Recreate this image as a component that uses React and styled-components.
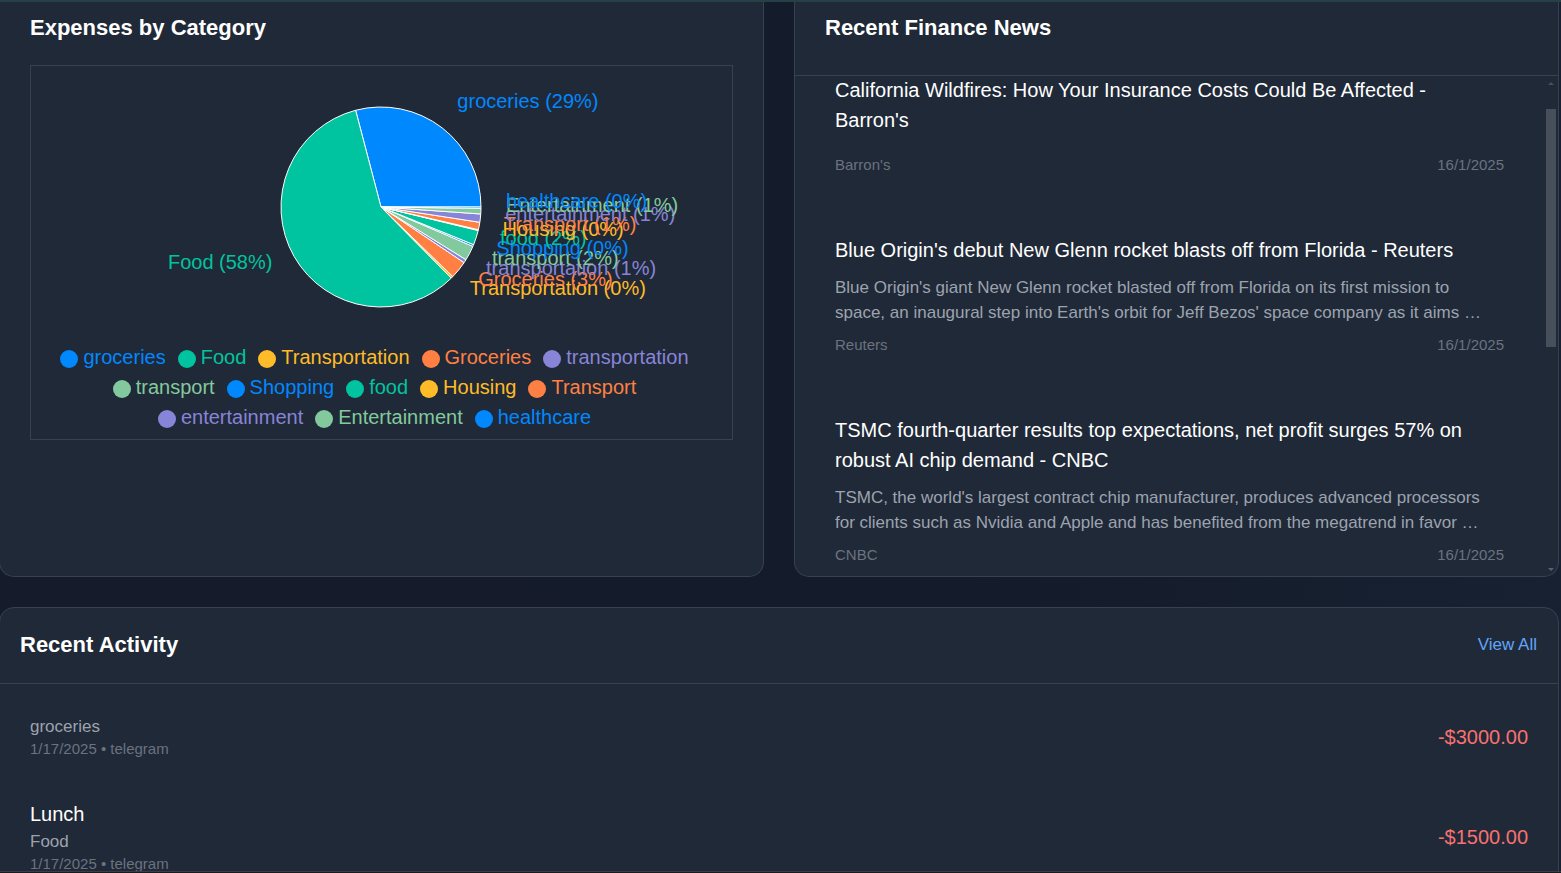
import React from "react";
import styled, { createGlobalStyle } from "styled-components";

const GlobalStyle = createGlobalStyle`
  *, *::before, *::after { box-sizing: border-box; }
  body {
    margin: 0;
    overflow: hidden;
    background: #141b2a;
    color: #fff;
    font: 20px/30px "Liberation Sans", Arial, sans-serif;
  }
  h2, h3, p, ul { margin: 0; padding: 0; }
  ul { list-style: none; }
`;

const Viewport = styled.div`
  display: flex;
  flex-direction: column;
  height: 100vh;
  overflow: hidden;
  background: linear-gradient(90deg, #151b2b 0%, #141b2a 60%, #172131 100%);
`;

const TopEdge = styled.div`
  flex: none;
  height: 2px;
  background: #264145;
`;

const Content = styled.main`
  flex: 1;
  min-height: 0;
  margin: 0 2px 0 -1px;
  overflow: hidden;
`;

const BottomEdge = styled.div`
  flex: none;
  height: 2px;
  border-top: 1px solid #3a3d42;
  background: #1b1b1d;
`;

const Columns = styled.div`
  display: grid;
  grid-template-columns: 1fr 1fr;
  gap: 30px;
  margin-bottom: 30px;
`;

const Card = styled.section`
  min-width: 0;
  background: #202937;
  border: 1px solid #374151;
  border-radius: 15px;
  ${(p) => p.$cut && "border-top: 0; border-top-left-radius: 0; border-top-right-radius: 0;"}
`;

const Title = styled.h2`
  font-size: 22px;
  line-height: 30px;
  font-weight: 700;
`;

const ChartCard = styled(Card)`
  padding: 11px 30px 10px;
`;

const ChartFrame = styled.div`
  margin-top: 22px;
  padding-bottom: 7px;
  border: 1px solid #374151;
`;

const PieSvg = styled.svg`
  display: block;
  margin: 0 auto;
  max-width: 100%;
  font-size: 20px;
`;

const Legend = styled.ul`
  display: flex;
  flex-wrap: wrap;
  justify-content: center;
  padding: 0 26px 0 24px;
`;

const LegendItem = styled.li`
  display: flex;
  align-items: center;
  gap: 5px;
  margin-right: 12px;
  color: ${(p) => p.$color};

  &::before {
    content: "";
    width: 18px;
    height: 18px;
    margin-top: 3px;
    border-radius: 50%;
    background: currentColor;
  }
`;

const NewsHeader = styled.header`
  padding: 11px 30px 32px;
  border-bottom: 1px solid #374151;
`;

const NewsBody = styled.div`
  display: flex;
  margin-top: -1px;
`;

const NewsList = styled.ul`
  flex: 1;
  min-width: 0;
  display: flex;
  flex-direction: column;
  gap: 60px;
  padding: 0 42px 11px 40px;
`;

const NewsItem = styled.li`
  display: flex;
  flex-direction: column;
  gap: 10px;
`;

const Headline = styled.h3`
  font-size: 20px;
  line-height: 30px;
  font-weight: 400;
`;

const Excerpt = styled.p`
  color: #9ca3af;
  font-size: 17px;
  line-height: 25px;
`;

const Meta = styled.div`
  display: flex;
  justify-content: space-between;
  color: #6b7280;
  font-size: 15px;
  line-height: 20px;
`;

const ScrollTrack = styled.div`
  flex: none;
  display: flex;
  flex-direction: column;
  align-items: center;
  width: 10px;
  margin-right: 2px;
  padding: 7px 0 5px;
`;

const ScrollThumb = styled.div`
  width: 10px;
  height: 238px;
  margin: 24px 0 auto;
  background: #474f5b;
`;

const ActivityHeader = styled.header`
  display: flex;
  justify-content: space-between;
  align-items: center;
  padding: 22px 21px 23px 20px;
  border-bottom: 1px solid #374151;
`;

const ViewAll = styled.a`
  color: #60a5fa;
  font-size: 17px;
  text-decoration: none;
`;

const ActivityList = styled.ul`
  display: flex;
  flex-direction: column;
  gap: 40px;
  padding: 30px;
`;

const ActivityItem = styled.li`
  display: flex;
  justify-content: space-between;
  align-items: center;
`;

const Category = styled.p`
  color: #9ca3af;
  font-size: 17px;
  line-height: 25px;
`;

const Amount = styled.span`
  color: #f87171;
`;

const BLUE = "#0088fe";
const GREEN = "#00c49f";
const YELLOW = "#ffbb28";
const ORANGE = "#ff8042";
const PURPLE = "#8884d8";
const MINT = "#82ca9d";

// Each slice runs counter-clockwise from the previous end angle.
const slices = [
  { name: "groceries", percent: 29, end: 104.7, color: BLUE },
  { name: "Food", percent: 58, end: 314.7, color: GREEN },
  { name: "Transportation", percent: 0, end: 315.9, color: YELLOW },
  { name: "Groceries", percent: 3, end: 326.2, color: ORANGE },
  { name: "transportation", percent: 1, end: 328.2, color: PURPLE },
  { name: "transport", percent: 2, end: 336.8, color: MINT },
  { name: "Shopping", percent: 0, end: 337.9, color: BLUE },
  { name: "food", percent: 2, end: 346.4, color: GREEN },
  { name: "Housing", percent: 0, end: 346.9, color: YELLOW },
  { name: "Transport", percent: 1, end: 351.2, color: ORANGE },
  { name: "entertainment", percent: 1, end: 356, color: PURPLE },
  { name: "Entertainment", percent: 1, end: 359.2, color: MINT },
  { name: "healthcare", percent: 0, end: 360, color: BLUE },
].map((s, i, all) => ({ ...s, start: i ? all[i - 1].end : 0 }));

const point = (angle, radius) => {
  const a = (angle * Math.PI) / 180;
  return [Math.cos(a) * radius, -Math.sin(a) * radius];
};

function Pie() {
  return (
    <PieSvg width="601" height="276" viewBox="-300 -141 601 276" role="img" aria-label="Expenses by category">
      {slices.map((s) => {
        const large = s.end - s.start > 180 ? 1 : 0;
        return (
          <path
            key={s.name}
            d={`M0 0L${point(s.start, 100).join(" ")}A100 100 0 ${large} 0 ${point(s.end, 100).join(" ")}Z`}
            fill={s.color}
            stroke="#fff"
          />
        );
      })}
      {slices.map((s) => {
        const [x, y] = point((s.start + s.end) / 2, 125);
        return (
          <text key={s.name} x={x} y={y} fill={s.color} textAnchor={x > 0 ? "start" : "end"}>
            {`${s.name} (${s.percent}%)`}
          </text>
        );
      })}
    </PieSvg>
  );
}

const news = [
  {
    title: ["California Wildfires: How Your Insurance Costs Could Be Affected -", "Barron's"],
    excerpt: [],
    source: "Barron's",
  },
  {
    title: ["Blue Origin's debut New Glenn rocket blasts off from Florida - Reuters"],
    excerpt: [
      "Blue Origin's giant New Glenn rocket blasted off from Florida on its first mission to",
      "space, an inaugural step into Earth's orbit for Jeff Bezos' space company as it aims …",
    ],
    source: "Reuters",
  },
  {
    title: ["TSMC fourth-quarter results top expectations, net profit surges 57% on", "robust AI chip demand - CNBC"],
    excerpt: [
      "TSMC, the world's largest contract chip manufacturer, produces advanced processors",
      "for clients such as Nvidia and Apple and has benefited from the megatrend in favor …",
    ],
    source: "CNBC",
  },
];

const activity = [
  { category: "groceries", amount: "-$3000.00" },
  { title: "Lunch", category: "Food", amount: "-$1500.00" },
];

const lines = (list) =>
  list.map((text, i) => (
    <React.Fragment key={text}>
      {i > 0 && <br />}
      {text}
    </React.Fragment>
  ));

export default function App() {
  return (
    <>
      <GlobalStyle />
      <Viewport>
        <TopEdge />
        <Content>
          <Columns>
            <ChartCard $cut>
              <Title>Expenses by Category</Title>
              <ChartFrame>
                <Pie />
                <Legend>
                  {slices.map((s) => (
                    <LegendItem key={s.name} $color={s.color}>{s.name}</LegendItem>
                  ))}
                </Legend>
              </ChartFrame>
            </ChartCard>
            <Card $cut>
              <NewsHeader>
                <Title>Recent Finance News</Title>
              </NewsHeader>
              <NewsBody>
                <NewsList>
                  {news.map((n) => (
                    <NewsItem key={n.source}>
                      <Headline>{lines(n.title)}</Headline>
                      <Excerpt>{lines(n.excerpt)}</Excerpt>
                      <Meta>
                        <span>{n.source}</span>
                        <span>16/1/2025</span>
                      </Meta>
                    </NewsItem>
                  ))}
                </NewsList>
                <ScrollTrack aria-hidden="true">
                  <svg width="6" height="3" viewBox="0 0 6 3"><path d="M0 3L3 0L6 3Z" fill="#474f5b" /></svg>
                  <ScrollThumb />
                  <svg width="6" height="3" viewBox="0 0 6 3"><path d="M0 0L3 3L6 0Z" fill="#5a626d" /></svg>
                </ScrollTrack>
              </NewsBody>
            </Card>
          </Columns>
          <Card>
            <ActivityHeader>
              <Title>Recent Activity</Title>
              <ViewAll href="#activity">View All</ViewAll>
            </ActivityHeader>
            <ActivityList>
              {activity.map((a) => (
                <ActivityItem key={a.amount}>
                  <div>
                    {a.title && <Headline>{a.title}</Headline>}
                    <Category>{a.category}</Category>
                    <Meta>1/17/2025 • telegram</Meta>
                  </div>
                  <Amount>{a.amount}</Amount>
                </ActivityItem>
              ))}
            </ActivityList>
          </Card>
        </Content>
        <BottomEdge />
      </Viewport>
    </>
  );
}
